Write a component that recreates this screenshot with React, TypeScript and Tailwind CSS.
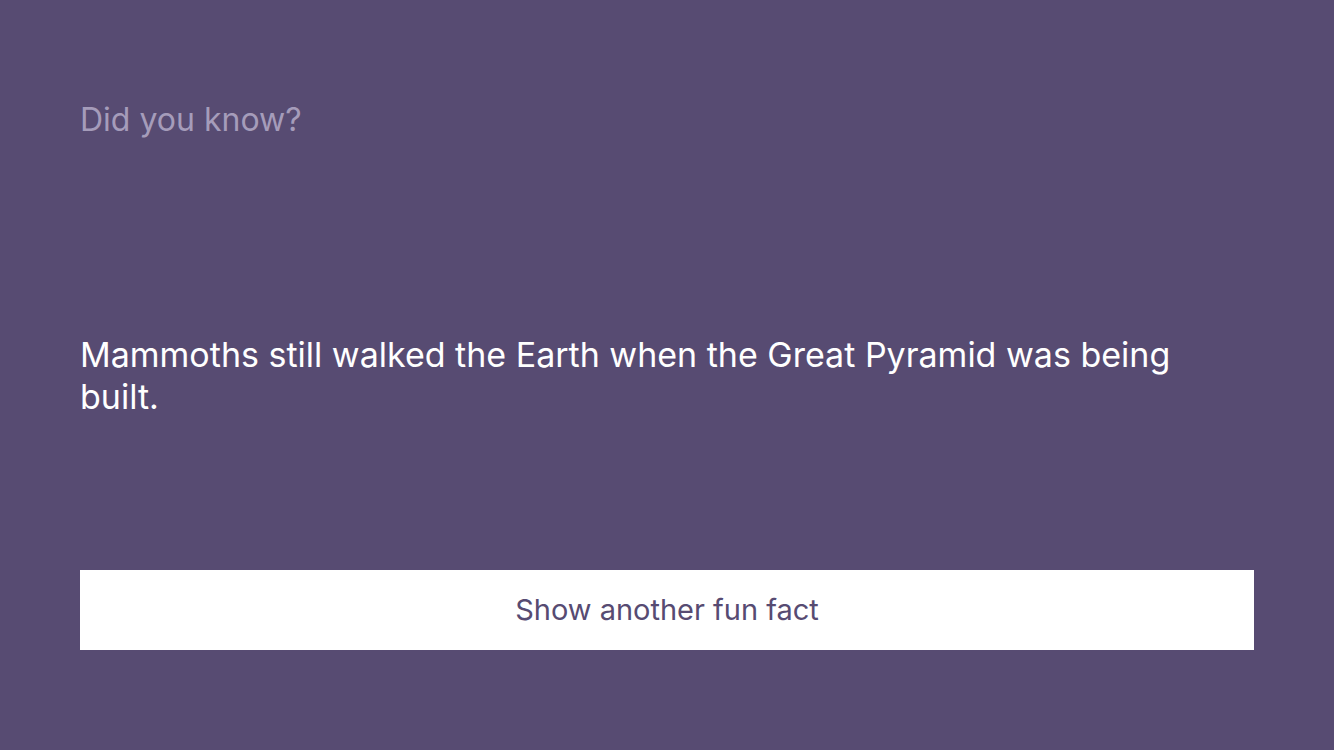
export default function App() {
  return (
    <div
      className="flex h-[750px] w-full flex-col bg-[#574b72] px-20"
      style={{ fontFamily: 'Inter, "Noto Sans", sans-serif' }}
    >
      <p className="mt-[101px] h-[38px] text-[32px] leading-[38px] text-[#a59cba]">Did you know?</p>
      <div className="flex flex-1 items-center pt-[42px]">
        <p className="w-full pr-[80px] text-[34px] leading-[42px] text-white">
          Mammoths still walked the Earth when the Great Pyramid was being built.
        </p>
      </div>
      <button className="mb-[100px] h-20 w-full bg-white text-[29px] text-[#574b72]">
        Show another fun fact
      </button>
    </div>
  );
}
